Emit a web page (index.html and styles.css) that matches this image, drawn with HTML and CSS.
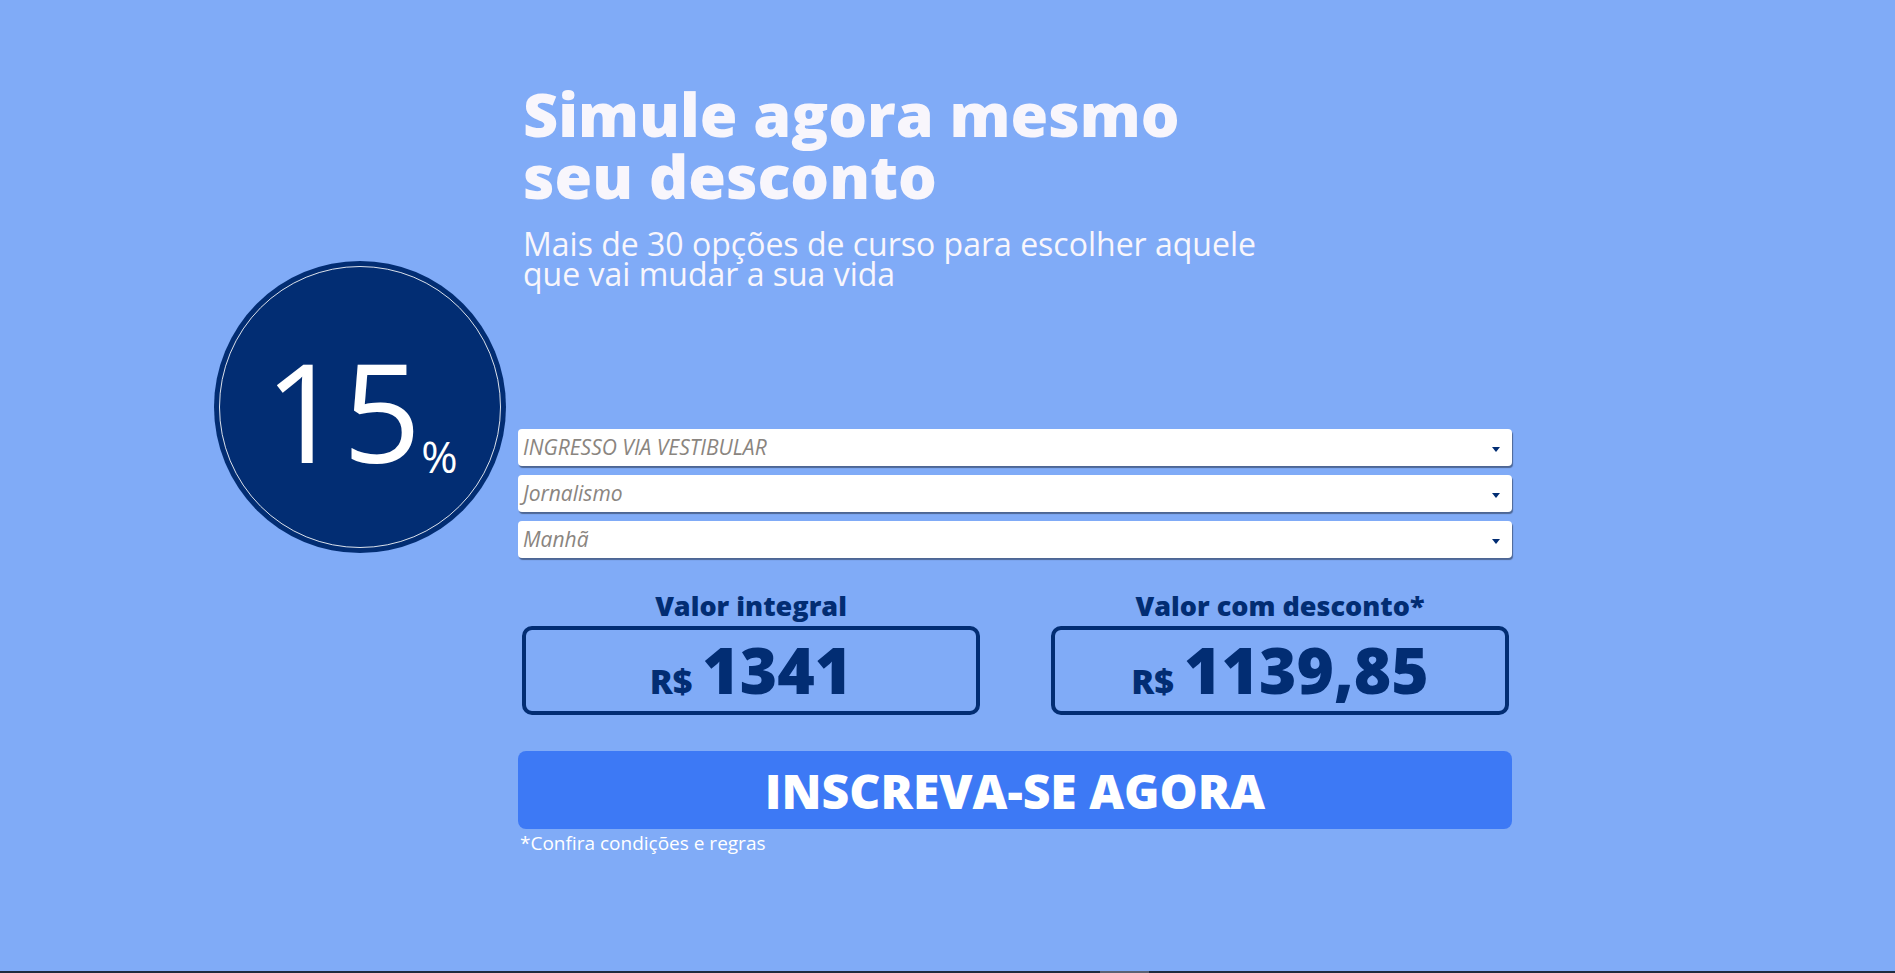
FILE: index.html
```html
<!DOCTYPE html>
<html lang="pt-BR">
<head>
<meta charset="utf-8">
<title>Simule seu desconto</title>
<link rel="stylesheet" href="styles.css">
</head>
<body>
<div class="page">
  <div class="badge-col">
    <div class="badge">
      <div class="badge-num"><span class="num">15</span><span class="pct">%</span></div>
    </div>
  </div>
  <div class="main">
    <h1 class="title">Simule agora mesmo<br>seu desconto</h1>
    <p class="subtitle">Mais de 30 opções de curso para escolher aquele<br>que vai mudar a sua vida</p>
    <div class="selects">
      <div class="select"><span class="select-text">INGRESSO VIA VESTIBULAR</span><span class="arrow"></span></div>
      <div class="select"><span class="select-text">Jornalismo</span><span class="arrow"></span></div>
      <div class="select"><span class="select-text">Manhã</span><span class="arrow"></span></div>
    </div>
    <div class="values">
      <div class="value">
        <div class="value-label">Valor integral</div>
        <div class="value-box"><span class="cur">R$</span><span class="amount">1341</span></div>
      </div>
      <div class="value">
        <div class="value-label">Valor com desconto*</div>
        <div class="value-box"><span class="cur">R$</span><span class="amount">1139,85</span></div>
      </div>
    </div>
    <button class="cta">INSCREVA-SE AGORA</button>
    <p class="note">*Confira condições e regras</p>
  </div>
</div>
<div class="bottom-bar"><div class="bar-thumb"></div></div>
</body>
</html>
```
FILE: styles.css
```css
html, body {
  margin: 0;
  padding: 0;
}
body {
  background: #80abf7;
  font-family: "Open Sans", "Liberation Sans", sans-serif;
  height: 973px;
  overflow: hidden;
}
.page {
  height: 971px;
  display: flex;
  align-items: flex-start;
  padding-left: 214px;
  box-sizing: border-box;
}
.badge-col {
  width: 292px;
  padding-top: 261px;
}
.badge {
  width: 292px;
  height: 292px;
  border-radius: 50%;
  background: #022d73;
  position: relative;
  display: flex;
  align-items: center;
  justify-content: center;
}
.badge::after {
  content: "";
  position: absolute;
  inset: 5px;
  border-radius: 50%;
  border: 1px solid rgba(255, 255, 255, 0.85);
}
.badge-num {
  color: #fff;
  display: flex;
  align-items: baseline;
  margin-top: 6px;
  margin-left: 2px;
}
.num {
  font-size: 137px;
  font-weight: 400;
  line-height: 137px;
}
.pct {
  font-size: 44px;
  font-weight: 400;
  position: relative;
  top: 10px;
  margin-left: 0;
}
.main {
  width: 994px;
  margin-left: 12px;
  padding-top: 83px;
}
.title {
  margin: 0 0 0 5px;
  font-size: 61px;
  line-height: 62px;
  font-weight: 800;
  color: #f8f6fc;
}
.subtitle {
  margin: 22px 0 0 5px;
  font-size: 32px;
  line-height: 30px;
  font-weight: 400;
  color: #f8f6fc;
}
.selects {
  margin-top: 140px;
  display: flex;
  flex-direction: column;
  gap: 9px;
}
.select {
  height: 37px;
  background: #fff;
  border-radius: 4px;
  box-shadow: 1px 2px 1px rgba(0, 0, 0, 0.4);
  display: flex;
  align-items: center;
  justify-content: space-between;
  padding: 0 12px 0 5px;
}
.select-text {
  font-size: 21px;
  font-style: italic;
  font-weight: 400;
  color: #8a8580;
  line-height: 37px;
}
.arrow {
  width: 0;
  height: 0;
  border-left: 4px solid transparent;
  border-right: 4px solid transparent;
  border-top: 5px solid #022d73;
  margin-top: 4px;
}
.values {
  margin-top: 33px;
  display: flex;
  justify-content: space-between;
  padding: 0 3px 0 4px;
}
.value {
  width: 458px;
}
.value-label {
  text-align: center;
  font-size: 27px;
  line-height: 30px;
  font-weight: 800;
  color: #022d73;
  margin-bottom: 5px;
}
.value-box {
  height: 89px;
  box-sizing: border-box;
  border: 4px solid #022d73;
  border-radius: 10px;
  display: flex;
  justify-content: center;
  align-items: baseline;
  padding-top: 8px;
  color: #022d73;
}
.cur {
  font-size: 34px;
  font-weight: 800;
  margin-right: 10px;
}
.amount {
  font-size: 64px;
  font-weight: 800;
  line-height: 64px;
}
.cta {
  display: block;
  width: 100%;
  margin-top: 36px;
  height: 78px;
  border: 0;
  border-radius: 8px;
  background: #3d79f5;
  color: #fff;
  font-family: "Open Sans", "Liberation Sans", sans-serif;
  font-size: 48px;
  font-weight: 800;
  padding: 0;
  cursor: pointer;
}
.note {
  margin: 2px 0 0 2px;
  font-size: 19px;
  line-height: 24px;
  color: #fff;
}
.bottom-bar {
  height: 2px;
  background: #1e2b3f;
  position: relative;
}
.bar-thumb {
  margin-left: 1100px;
  width: 49px;
  height: 2px;
  background: #5b6274;
}
```
